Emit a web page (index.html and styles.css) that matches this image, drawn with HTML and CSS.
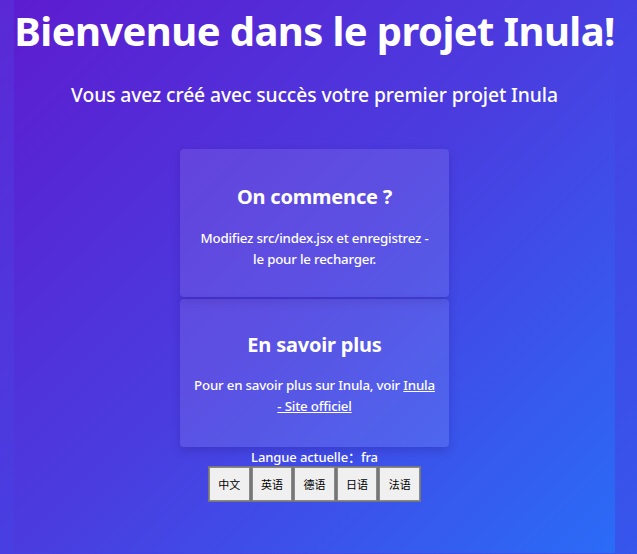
FILE: index.html
```html
<!DOCTYPE html>
<html lang="fr">
<head>
<meta charset="utf-8">
<title>Inula</title>
<link rel="stylesheet" href="styles.css">
</head>
<body>
<div class="page">
  <div class="app">
    <h1 class="title">Bienvenue dans le projet Inula!</h1>
    <p class="subtitle">Vous avez créé avec succès votre premier projet Inula</p>
    <div class="cards">
      <div class="card">
        <h2 class="card-title">On commence ?</h2>
        <p class="card-text">Modifiez src/index.jsx et enregistrez -<br>le pour le recharger.</p>
      </div>
      <div class="card">
        <h2 class="card-title">En savoir plus</h2>
        <p class="card-text">Pour en savoir plus sur Inula, voir <a class="link" href="#">Inula - Site officiel</a></p>
      </div>
    </div>
    <div class="lang">Langue actuelle：fra</div>
    <div class="buttons">
      <button class="btn">中文</button><button class="btn">英语</button><button class="btn">德语</button><button class="btn">日语</button><button class="btn">法语</button>
    </div>
  </div>
</div>
</body>
</html>
```
FILE: styles.css
```css
html, body {
  margin: 0;
  padding: 0;
  height: 100%;
}
body {
  font-family: "Noto Sans", "Open Sans", "Noto Sans CJK SC", sans-serif;
  color: #ffffff;
  overflow: hidden;
}
.page {
  height: 554px;
  padding: 0 22px 1px 14px;
  box-sizing: border-box;
  background: linear-gradient(135deg, #5a29d6 0%, #4740e2 50%, #3656ec 100%);
}
.app {
  height: 553px;
  background: linear-gradient(135deg, #5d1ccf 0%, #4a3de0 50%, #2a6cf7 100%);
  display: flex;
  flex-direction: column;
  align-items: center;
}
.title {
  margin: 5px 0 0;
  font-size: 40px;
  line-height: 52px;
  font-weight: 700;
  letter-spacing: -0.6px;
  white-space: nowrap;
}
.subtitle {
  margin: 25px 0 0;
  font-size: 19.3px;
  line-height: 26px;
  font-weight: 500;
  letter-spacing: -0.1px;
}
.cards {
  margin-top: 41px;
  display: flex;
  flex-direction: column;
  gap: 2px;
  width: 269px;
}
.card {
  height: 148px;
  box-sizing: border-box;
  padding: 32px 11px 0;
  background: rgba(255, 255, 255, 0.1);
  border-radius: 4px;
  box-shadow: 0 4px 10px rgba(40, 20, 120, 0.25);
  text-align: center;
}
.card-title {
  margin: 0;
  font-size: 20px;
  line-height: 32px;
  font-weight: 700;
  letter-spacing: -0.2px;
}
.card-text {
  margin: 15px 0 0;
  font-size: 13.3px;
  line-height: 21px;
  font-weight: 500;
  letter-spacing: -0.2px;
}
.card + .card .card-title {
  margin-top: -2px;
}
.card + .card .card-text {
  margin-top: 14px;
}
.link {
  color: #ffffff;
  text-decoration: underline;
}
.lang {
  margin-top: 1px;
  font-size: 13px;
  line-height: 18px;
  font-weight: 500;
  letter-spacing: -0.1px;
}
.buttons {
  display: flex;
}
.btn {
  width: 42.6px;
  height: 36px;
  margin: 0;
  padding: 0;
  background: #f0f0f0;
  border: 1px solid #767676;
  box-shadow: inset 0 0 0 1px #8a8a8a;
  font-family: "Noto Sans CJK SC", sans-serif;
  font-size: 11px;
  color: #000000;
}
```
